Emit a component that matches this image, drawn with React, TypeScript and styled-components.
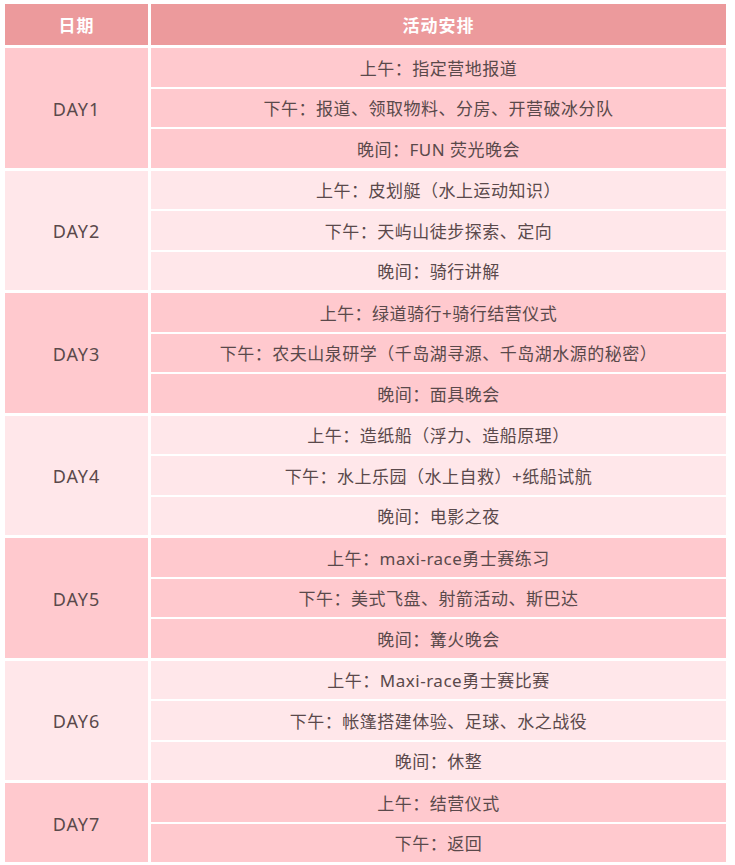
import styled, { createGlobalStyle } from "styled-components";

const GlobalStyle = createGlobalStyle`
  body {
    margin: 0;
    background: #ffffff;
    font-family: "Noto Sans", "Noto Sans CJK SC", sans-serif;
  }
`;

const StyledPage = styled.div`
  padding: 4px 9px 4px 5px;
  width: 721px;
`;

const StyledTable = styled.div`
  display: flex;
  flex-direction: column;
  gap: 3px;
`;

const StyledHeaderRow = styled.div`
  display: grid;
  grid-template-columns: 143px 1fr;
  column-gap: 3px;
  height: 41px;
`;

const StyledHeaderCell = styled.div`
  background-color: #ec9a9c;
  color: #ffffff;
  font-weight: 700;
  font-size: 17px;
  letter-spacing: 1px;
  display: flex;
  align-items: center;
  justify-content: center;
`;

const StyledDayBlock = styled.div<{ $light: boolean }>`
  display: grid;
  grid-template-columns: 143px 1fr;
  column-gap: 3px;
  --cell-bg: ${(p) => (p.$light ? "#ffe7ea" : "#ffc9ce")};
`;

const StyledDayCell = styled.div`
  background-color: var(--cell-bg);
  color: #5a494b;
  font-size: 18px;
  letter-spacing: 1px;
  padding-top: 2px;
  display: flex;
  align-items: center;
  justify-content: center;
`;

const StyledSlots = styled.div`
  display: flex;
  flex-direction: column;
  gap: 2px;
`;

const StyledSlot = styled.div`
  background-color: var(--cell-bg);
  color: #5a494b;
  height: 38.5px;
  font-size: 17px;
  letter-spacing: 0.5px;
  display: flex;
  align-items: center;
  justify-content: center;
  white-space: nowrap;
`;

const schedule: { day: string; items: string[] }[] = [
  {
    day: "DAY1",
    items: ["上午：指定营地报道", "下午：报道、领取物料、分房、开营破冰分队", "晚间：FUN 荧光晚会"],
  },
  {
    day: "DAY2",
    items: ["上午：皮划艇（水上运动知识）", "下午：天屿山徒步探索、定向", "晚间：骑行讲解"],
  },
  {
    day: "DAY3",
    items: ["上午：绿道骑行+骑行结营仪式", "下午：农夫山泉研学（千岛湖寻源、千岛湖水源的秘密）", "晚间：面具晚会"],
  },
  {
    day: "DAY4",
    items: ["上午：造纸船（浮力、造船原理）", "下午：水上乐园（水上自救）+纸船试航", "晚间：电影之夜"],
  },
  {
    day: "DAY5",
    items: ["上午：maxi-race勇士赛练习", "下午：美式飞盘、射箭活动、斯巴达", "晚间：篝火晚会"],
  },
  {
    day: "DAY6",
    items: ["上午：Maxi-race勇士赛比赛", "下午：帐篷搭建体验、足球、水之战役", "晚间：休整"],
  },
  {
    day: "DAY7",
    items: ["上午：结营仪式", "下午：返回"],
  },
];

const App: React.FC = () => {
  return (
    <StyledPage>
      <GlobalStyle />
      <StyledTable>
        <StyledHeaderRow>
          <StyledHeaderCell>日期</StyledHeaderCell>
          <StyledHeaderCell>活动安排</StyledHeaderCell>
        </StyledHeaderRow>
        {schedule.map((d, i) => (
          <StyledDayBlock key={d.day} $light={i % 2 === 1}>
            <StyledDayCell>{d.day}</StyledDayCell>
            <StyledSlots>
              {d.items.map((item) => (
                <StyledSlot key={item}>{item}</StyledSlot>
              ))}
            </StyledSlots>
          </StyledDayBlock>
        ))}
      </StyledTable>
    </StyledPage>
  );
};

export default App;
